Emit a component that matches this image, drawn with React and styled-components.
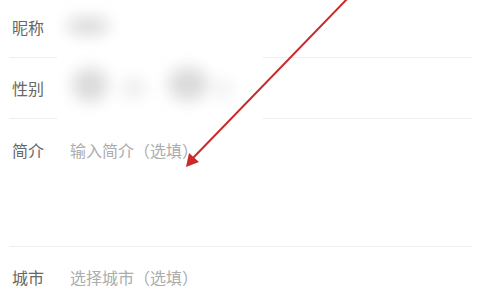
import React from "react";
import styled, { createGlobalStyle } from "styled-components";

const GlobalStyle = createGlobalStyle`
  html, body {
    margin: 0;
    padding: 0;
    background: #ffffff;
  }
  body {
    font-family: "Noto Sans CJK SC", "Noto Sans", sans-serif;
  }
`;

const Page = styled.div`
  position: relative;
  width: 482px;
  height: 290px;
  overflow: hidden;
  background: #ffffff;
`;

const List = styled.div`
  display: flex;
  flex-direction: column;
  margin-top: -3px;
`;

const Row = styled.div`
  display: flex;
  align-items: ${(p) => (p.$top ? "flex-start" : "center")};
  min-height: ${(p) => (p.$tall ? "128px" : "61px")};
  box-sizing: border-box;
  padding-top: ${(p) => (p.$top ? "19px" : "0")};
  margin: 0 10px 0 9px;
  border-bottom: 1px solid ${(p) => (p.$last ? "transparent" : "#eeeeee")};
`;

const Label = styled.div`
  width: 58px;
  padding-left: 3px;
  flex-shrink: 0;
  font-size: 16px;
  line-height: 24px;
  color: #676767;
`;

const Value = styled.div`
  font-size: 16px;
  line-height: 24px;
  color: #acacac;
`;

const Mosaic = styled.svg`
  position: absolute;
  left: 57px;
  top: 0;
  width: 206px;
  height: 121px;
`;

const Arrow = styled.svg`
  position: absolute;
  left: 0;
  top: 0;
  width: 482px;
  height: 290px;
  pointer-events: none;
`;

const rows = [
  { label: "昵称", value: "" },
  { label: "性别", value: "" },
  { label: "简介", value: "输入简介（选填）", tall: true },
  { label: "城市", value: "选择城市（选填）", last: true },
];

export default function App() {
  return (
    <>
      <GlobalStyle />
      <Page>
        <List>
          {rows.map((r) => (
            <Row key={r.label} $tall={r.tall} $top={r.tall} $last={r.last}>
              <Label>{r.label}</Label>
              <Value>{r.value}</Value>
            </Row>
          ))}
        </List>
        <Mosaic viewBox="57 0 206 121">
          <defs>
            <filter id="soft" x="-50%" y="-50%" width="200%" height="200%">
              <feGaussianBlur stdDeviation="8" />
            </filter>
          </defs>
          <rect x="57" y="0" width="206" height="121" fill="#ffffff" />
          <g filter="url(#soft)">
            <ellipse cx="88" cy="26" rx="22" ry="9" fill="#d9d9d9" />
            <ellipse cx="90" cy="85" rx="18" ry="17" fill="#dadada" />
            <ellipse cx="134" cy="88" rx="11" ry="11" fill="#ececec" />
            <ellipse cx="188" cy="84" rx="20" ry="17" fill="#dadada" />
            <ellipse cx="223" cy="89" rx="9" ry="9" fill="#eeeeee" />
          </g>
        </Mosaic>
        <Arrow viewBox="0 0 482 290">
          <line
            x1="349"
            y1="-3"
            x2="193"
            y2="158"
            stroke="#cc2a2a"
            strokeWidth="2"
            strokeLinecap="round"
          />
          <polygon points="186,167 189,153 199,162" fill="#cc2a2a" />
        </Arrow>
      </Page>
    </>
  );
}
